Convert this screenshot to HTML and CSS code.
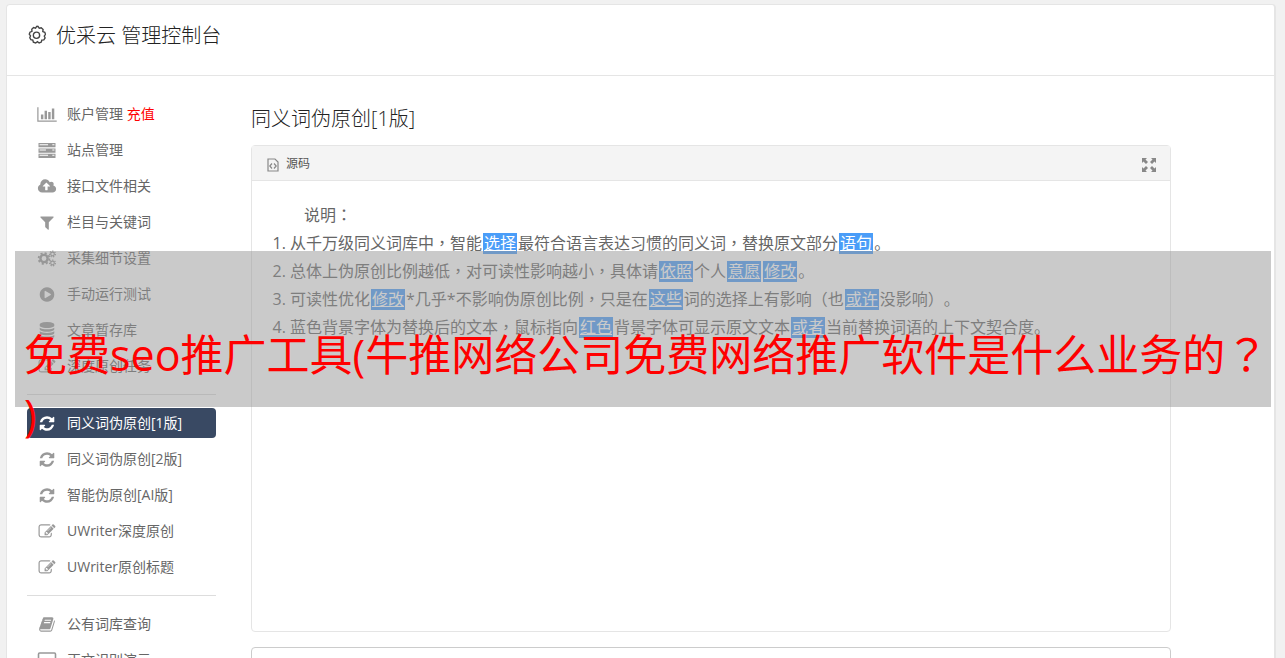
FILE: index.html
```html
<!DOCTYPE html>
<html lang="zh-CN">
<head>
    <meta charset="UTF-8">
    <title>优采云 管理控制台</title>
    <link rel="stylesheet" href="styles.css">
</head>
<body>
    <svg class="sprite" aria-hidden="true">
        <symbol id="chart" viewBox="0 0 2048 1792"><path d="M640 896v512h-256v-512h256zm384-384v896h-256v-896h256zm1024 1024v128h-2048v-1536h128v1408h1920zm-640-896v768h-256v-768h256zm384-384v1152h-256v-1152h256z"/></symbol>
        <symbol id="server" viewBox="0 0 18 16"><path fill-rule="evenodd" d="M1 1h16v4H1zM1 6h16v4H1zM1 11h16v4H1zM2 2v1h8V2zM2 7v1h6V7zM2 12v1h8v-1zM14 2v1h2V2zM14 7v1h2V7zM14 12v1h2v-1z"/></symbol>
        <symbol id="cloud" viewBox="-64 0 1920 1792"><path d="M1216 864q0-14-9-23l-352-352q-9-9-23-9t-23 9l-351 351q-10 12-10 24 0 14 9 23t23 9h224v352q0 13 9.5 22.5t22.5 9.5h192q13 0 22.5-9.5t9.5-22.5v-352h224q13 0 22.5-9.5t9.5-22.5zm640 288q0 159-112.5 271.5t-271.5 112.5h-1088q-185 0-316.5-131.5t-131.5-316.5q0-130 70-240t188-165q-2-30-2-43 0-212 150-362t362-150q156 0 285.5 87t188.5 231q71-62 166-62 106 0 181 75t75 181q0 76-41 138 130 31 213.5 135.5t83.5 238.5z"/></symbol>
        <symbol id="filter" viewBox="0 0 1792 1792"><path d="M1595 295q17 41-14 70l-493 493v742q0 42-39 59-13 5-25 5-27 0-45-19l-256-256q-19-19-19-45v-486l-493-493q-31-29-14-70 17-39 59-39h1280q42 0 59 39z"/></symbol>
        <symbol id="cogs" viewBox="0 0 20 16">
            <g fill="none" stroke="currentColor">
                <circle cx="7" cy="8" r="3.6" stroke-width="2.4"/>
                <circle cx="7" cy="8" r="5.4" stroke-width="1.8" stroke-dasharray="2.12 2.12"/>
                <circle cx="15.5" cy="3.5" r="1.8" stroke-width="1.2"/>
                <circle cx="15.5" cy="3.5" r="2.9" stroke-width="1.2" stroke-dasharray="1.3 1.3"/>
                <circle cx="15.5" cy="12.5" r="1.8" stroke-width="1.2"/>
                <circle cx="15.5" cy="12.5" r="2.9" stroke-width="1.2" stroke-dasharray="1.3 1.3"/>
            </g>
        </symbol>
        <symbol id="play" viewBox="0 0 1792 1792"><path d="M896 128q209 0 385.5 103t279.5 279.5 103 385.5-103 385.5-279.5 279.5-385.5 103-385.5-103-279.5-279.5-103-385.5 103-385.5 279.5-279.5 385.5-103zm384 823q32-18 32-55t-32-55l-544-320q-31-19-64-1-32 19-32 56v640q0 37 32 56 16 8 32 8 17 0 32-9z"/></symbol>
        <symbol id="database" viewBox="0 0 1792 1792"><path d="M896 768q237 0 443-43t325-127v170q0 69-103 128t-280 93.5-385 34.5-385-34.5-280-93.5-103-128v-170q119 84 325 127t443 43zm0 768q237 0 443-43t325-127v170q0 69-103 128t-280 93.5-385 34.5-385-34.5-280-93.5-103-128v-170q119 84 325 127t443 43zm0-384q237 0 443-43t325-127v170q0 69-103 128t-280 93.5-385 34.5-385-34.5-280-93.5-103-128v-170q119 84 325 127t443 43zm0-1152q208 0 385 34.5t280 93.5 103 128v128q0 69-103 128t-280 93.5-385 34.5-385-34.5-280-93.5-103-128v-128q0-69 103-128t280-93.5 385-34.5z"/></symbol>
        <symbol id="edit" viewBox="0 0 1792 1792"><path d="M888 1184l116-116-152-152-116 116v56h96v96h56zm440-720q-16-16-33 1l-350 350q-17 17-1 33t33-1l350-350q17-17 1-33zm80 594v190q0 119-84.5 203.5t-203.5 84.5h-832q-119 0-203.5-84.5t-84.5-203.5v-832q0-119 84.5-203.5t203.5-84.5h832q63 0 117 25 15 7 18 23 3 17-9 29l-49 49q-14 14-32 8-23-6-45-6h-832q-66 0-113 47t-47 113v832q0 66 47 113t113 47h832q66 0 113-47t47-113v-126q0-13 9-22l64-64q15-15 35-7t20 29zm-96-738l288 288-672 672h-288v-288zm444 132l-92 92-288-288 92-92q28-28 68-28t68 28l152 152q28 28 28 68t-28 68z"/></symbol>
        <symbol id="refresh" viewBox="0 0 1792 1792"><path d="M1639 1056q0 5-1 7-64 268-268 434.5t-478 166.5q-146 0-282.5-55t-243.5-157l-129 129q-19 19-45 19t-45-19-19-45v-448q0-26 19-45t45-19h448q26 0 45 19t19 45-19 45l-137 137q71 66 161 102t187 36q134 0 250-65t186-179q11-17 53-117 8-23 30-23h192q13 0 22.5 9.5t9.5 22.5zm25-800v448q0 26-19 45t-45 19h-448q-26 0-45-19t-19-45 19-45l138-138q-148-137-349-137-134 0-250 65t-186 179q-11 17-53 117-8 23-30 23h-199q-13 0-22.5-9.5t-9.5-22.5v-7q65-268 270-434.5t480-166.5q146 0 284 55.5t245 156.5l130-129q19-19 45-19t45 19 19 45z"/></symbol>
        <symbol id="book" viewBox="0 0 1792 1792"><path d="M1703 478q40 57 18 129l-275 906q-19 64-76.5 107.5t-122.5 43.5h-923q-77 0-148.5-53.5t-99.5-131.5q-24-67-2-127 0-4 3-27t4-37q1-8-3-21.5t-3-19.5q2-11 8-21t16.5-23.5 16.5-23.5q23-38 45-91.5t30-91.5q3-10 .5-30t-.5-28q3-11 17-28t17-23q21-36 42-92t25-90q1-9-2.500-32t.5-28q4-13 22-30.500t22-22.500q19-26 42.500-84.500t27.500-96.500q1-8-3-25.500t-2-26.500q2-8 9-18t18-23 17-21q8-12 16.500-30.500t15-35 16-36 19.500-32 26.500-23.500 36-11.500 47.500 5.500l-1 3q38-9 51-9h761q74 0 114 56t18 130l-274 906q-36 119-71.500 153.500t-128.500 34.500h-869q-27 0-38 15-11 16-1 43 24 70 144 70h923q29 0 56-15.500t35-41.500l300-987q7-22 5-57 38 15 59 43zm-1064 2q-4 13 2 22.500t20 9.500h608q13 0 25.500-9.500t16.500-22.500l21-64q4-13-2-22.500t-20-9.500h-608q-13 0-25.500 9.500t-16.500 22.500zm-83 256q-4 13 2 22.500t20 9.500h608q13 0 25.500-9.500t16.500-22.500l21-64q4-13-2-22.500t-20-9.500h-608q-13 0-25.500 9.500t-16.500 22.500z"/></symbol>
        <symbol id="laptop" viewBox="0 0 18 16"><rect x="1" y="1" width="16" height="11" rx="1" fill="none" stroke="currentColor" stroke-width="1.5"/><path d="M0 14h18v1H0z"/></symbol>
    </svg>

    <div class="card">
        <header class="header">
            <svg class="gear" viewBox="1 0 18 20">
                <path d="M10 1.2l1.500.2 1.100 1.700 1.900-.5 1.800 1.600-.3 2 1.900.8.7 1.900-1.200 1.600.8 1.800-1.200 1.800-2 .2-.4 2-2.100.8-1.600-1.200-1.700 1.200-2.200-.8-.5-2-1.900-.3-1-1.800.7-1.800-1.200-1.600.7-1.900 1.900-.8-.2-2 1.700-1.600 1.900.5 1.100-1.700z"/>
                <circle cx="10" cy="9.8" r="3"/>
            </svg>
            <h1 class="title">优采云 管理控制台</h1>
        </header>

        <div class="content">
            <nav class="menu">
                <a class="item" href="#"><svg class="icon"><use href="#chart"/></svg><span>账户管理 <b class="pay">充值</b></span></a>
                <a class="item" href="#"><svg class="icon"><use href="#server"/></svg><span>站点管理</span></a>
                <a class="item" href="#"><svg class="icon"><use href="#cloud"/></svg><span>接口文件相关</span></a>
                <a class="item" href="#"><svg class="icon"><use href="#filter"/></svg><span>栏目与关键词</span></a>
                <a class="item" href="#"><svg class="icon"><use href="#cogs"/></svg><span>采集细节设置</span></a>
                <a class="item" href="#"><svg class="icon"><use href="#play"/></svg><span>手动运行测试</span></a>
                <a class="item" href="#"><svg class="icon"><use href="#database"/></svg><span>文章暂存库</span></a>
                <a class="item" href="#"><svg class="icon"><use href="#edit"/></svg><span>深度原创任务</span></a>
                <hr class="line">
                <a class="item active" href="#"><svg class="icon"><use href="#refresh"/></svg><span>同义词伪原创[1版]</span></a>
                <a class="item" href="#"><svg class="icon"><use href="#refresh"/></svg><span>同义词伪原创[2版]</span></a>
                <a class="item" href="#"><svg class="icon"><use href="#refresh"/></svg><span>智能伪原创[AI版]</span></a>
                <a class="item" href="#"><svg class="icon"><use href="#edit"/></svg><span>UWriter深度原创</span></a>
                <a class="item" href="#"><svg class="icon"><use href="#edit"/></svg><span>UWriter原创标题</span></a>
                <hr class="line">
                <a class="item" href="#"><svg class="icon"><use href="#book"/></svg><span>公有词库查询</span></a>
                <a class="item" href="#"><svg class="icon"><use href="#laptop"/></svg><span>正文识别演示</span></a>
            </nav>

            <main class="main">
                <h2 class="subtitle">同义词伪原创[1版]</h2>
                <section class="editor">
                    <div class="toolbar">
                        <button class="tool" type="button">
                            <svg class="source" viewBox="0 0 12 14"><path d="M1 1h7l3 3v9H1z"/><path d="M5 5.5L2.800 8 5 10.500M7 5.500L9.200 8 7 10.500"/></svg>
                            源码
                        </button>
                        <button class="tool" type="button" aria-label="全屏">
                            <svg class="full" viewBox="0 0 14 14"><path d="M0 0h5L3.500 1.500 6 4 4 6 1.500 3.500 0 5zM14 0v5l-1.500-1.500L10 6 8 4l2.500-2.500L9 0zM0 14V9l1.500 1.500L4 8l2 2-2.500 2.500L5 14zM14 14H9l1.500-1.500L8 10l2-2 2.500 2.500L14 9z"/></svg>
                        </button>
                    </div>
                    <div class="text">
                        <p class="intro">说明<span class="mark" lang="zh-TW">：</span></p>
                        <ol class="list">
                            <li>从千万级同义词库中<span class="mark" lang="zh-TW">，</span>智能<a class="word" href="#">选择</a>最符合语言表达习惯的同义词<span class="mark" lang="zh-TW">，</span>替换原文部分<a class="word" href="#">语句</a>。</li>
                            <li>总体上伪原创比例越低<span class="mark" lang="zh-TW">，</span>对可读性影响越小<span class="mark" lang="zh-TW">，</span>具体请<a class="word" href="#">依照</a>个人<a class="word" href="#">意愿</a><a class="word" href="#">修改</a>。</li>
                            <li>可读性优化<a class="word" href="#">修改</a>*几乎*不影响伪原创比例<span class="mark" lang="zh-TW">，</span>只是在<a class="word" href="#">这些</a>词的选择上有影响<span class="mark" lang="zh-TW">（</span>也<a class="word" href="#">或许</a>没影响<span class="mark" lang="zh-TW">）</span>。</li>
                            <li>蓝色背景字体为替换后的文本<span class="mark" lang="zh-TW">，</span>鼠标指向<a class="word" href="#">红色</a>背景字体可显示原文文本<a class="word" href="#">或者</a>当前替换词语的上下文契合度。</li>
                        </ol>
                    </div>
                </section>
                <textarea class="result" rows="6" aria-label="结果"></textarea>
            </main>
        </div>
    </div>

    <div class="banner">免费seo推广工具(牛推网络公司免费网络推广软件是什么业务的<span class="mark" lang="zh-TW">？</span><br>)</div>
</body>
</html>
```
FILE: styles.css
```css
html{
    overflow: hidden;
}
body{
    margin: 4px 9px 0 6px;
    background-color: #f1f1f1;
    font-family: "Open Sans", "Noto Sans CJK SC", sans-serif;
    font-size: 14px;
    color: #666;
    text-spacing-trim: space-all;
}
.sprite{
    display: none;
}
/* centred full-width punctuation */
.mark{
    font-family: "Noto Sans CJK TC", sans-serif;
    line-height: 1;
}
.card{
    background-color: white;
    border: 1px solid #e5e5e5;
    border-right-width: 2px;
    border-radius: 4px;
}
.header{
    display: flex;
    align-items: center;
    gap: 10px;
    padding: 15px 20px 24px;
    border-bottom: 1px solid #e5e5e5;
}
.gear{
    width: 19px;
    height: 21px;
    fill: none;
    stroke: #444;
    stroke-width: 1.3;
}
.title, .subtitle{
    margin: 0;
    font-size: 20px;
    font-weight: 300;
    line-height: 31px;
    color: #222;
}
.content{
    display: flex;
    gap: 35px;
    padding: 23px 103px 30px 20px;
}
.menu{
    display: flex;
    flex-direction: column;
    gap: 6px;
    width: 189px;
    flex-shrink: 0;
}
.item{
    display: flex;
    align-items: center;
    gap: 10px;
    height: 30px;
    padding-left: 10px;
    border-radius: 4px;
    color: #666;
    text-decoration: none;
}
.item span{
    padding-bottom: 2px;
}
.icon{
    width: 20px;
    height: 17px;
    color: #999;
    fill: currentColor;
}
.pay{
    font-weight: normal;
    color: red;
}
.active, .active .icon{
    background-color: #394963;
    color: white;
}
.line{
    width: 100%;
    margin: 7px 0;
    border: 0;
    border-top: 1px solid #ddd;
}
.main{
    flex: 1;
    min-width: 0;
}
.subtitle{
    margin: 4px 0 11px;
}
.editor{
    border: 1px solid #e5e5e5;
    border-radius: 4px;
}
.toolbar{
    display: flex;
    justify-content: space-between;
    height: 34px;
    padding: 0 14px 0 15px;
    background-color: #f4f4f4;
    border-bottom: 1px solid #e5e5e5;
}
.tool{
    display: flex;
    align-items: center;
    gap: 7px;
    padding: 0;
    border: 0;
    background: none;
    font-family: inherit;
    font-size: 12px;
    color: #555;
}
.source, .full{
    width: 12px;
    height: 14px;
    margin-top: 3px;
    fill: none;
    stroke: #888;
    stroke-width: 1.2;
}
.full{
    width: 14px;
    fill: #888;
    stroke: none;
}
.text{
    min-height: 410px;
    padding: 20px;
    font-size: 16px;
    line-height: 28px;
}
.intro{
    margin: 0;
    text-indent: 2em;
}
.list{
    margin: 0;
    padding-left: 18px;
}
.word{
    margin: 0 1px;
    padding: 0 1px;
    background: linear-gradient(#4a9df8, #4a9df8) center / 100% 21px no-repeat;
    color: white;
}
.result{
    display: block;
    box-sizing: border-box;
    width: 100%;
    margin-top: 15px;
    border: 1px solid #ccc;
    border-radius: 4px;
}
/* title strip over the page */
.banner{
    position: absolute;
    top: 251px;
    left: 15px;
    right: 14px;
    box-sizing: border-box;
    height: 156px;
    padding: 74px 0 0 9px;
    background-color: rgba(150, 150, 150, 0.5);
    font-size: 43px;
    line-height: 60px;
    white-space: nowrap;
    color: red;
}
```
